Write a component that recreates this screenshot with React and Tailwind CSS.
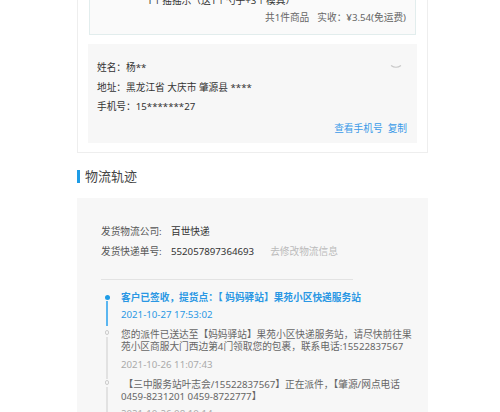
import React from "react";

const font = { fontFamily: '"Noto Sans", "Noto Sans CJK SC", sans-serif' };

function Chevron() {
  return (
    <svg width="12" height="6" viewBox="0 0 12 6" className="absolute right-[15px] top-[20px]">
      <path d="M1 1.5 Q6 5 11 1.5" fill="none" stroke="#c8c8c8" strokeWidth="1.2" />
    </svg>
  );
}

export default function App() {
  return (
    <div className="w-[500px] h-[412px] overflow-hidden bg-white text-[9.7px] text-[#333]" style={font}>
      {/* order card */}
      <div className="ml-[77px] w-[351px] -mt-[25px] border-x border-b border-[#eeeeee] px-[10px] pb-[9px]">
        <div className="mx-px border border-[#e2eded] bg-[#fafafa] pt-[17px] pb-[8px]">
          <div className="pl-[57px] leading-[16px] text-[#333]">1个摇摇乐（送1个勺子+3个模具）</div>
          <div className="mt-px pr-[9px] leading-[16px] text-right text-[#666]">
            <span>共1件商品</span>
            <span className="ml-[8px]">实收：¥3.54(免运费)</span>
          </div>
        </div>
        <div className="relative mt-[9px] bg-[#f7f7f7] pl-[9px] pr-[10px] pt-[14px] pb-[5px] leading-[19.5px] text-[#333]">
          <Chevron />
          <div>姓名：杨**</div>
          <div>地址：黑龙江省 大庆市 肇源县 ****</div>
          <div>手机号：15*******27</div>
          <div className="mt-[2px] text-right text-[#3a9ae8]">
            <span>查看手机号</span>
            <span className="ml-[5px]">复制</span>
          </div>
        </div>
      </div>

      {/* title */}
      <div className="ml-[77px] mt-[15px] flex items-center">
        <div className="w-[3px] h-[13px] bg-[#1e9ce6]" />
        <div className="ml-[5px] text-[13px] leading-[16px] text-[#444]">物流轨迹</div>
      </div>

      {/* logistics box */}
      <div className="ml-[77px] mt-[14px] w-[351px] h-[300px] bg-[#f7f7f7] pl-[24px] pr-[12px] pt-[24px]">
        <div className="leading-[20px] text-[#555]">
          <div className="flex">
            <span className="w-[70px]">发货物流公司:</span>
            <span className="text-[#333]">百世快递</span>
          </div>
          <div className="flex">
            <span className="w-[70px]">发货快递单号:</span>
            <span className="text-[#333]">552057897364693</span>
            <span className="ml-[16px] text-[#bbbbbb]">去修改物流信息</span>
          </div>
        </div>
        <div className="mt-[17px] w-[252px] h-px bg-[#e3e3e3]" />

        <div className="mt-[11px]">
          {/* item 1 */}
          <div className="flex">
            <div className="w-[20px] flex flex-col items-center pr-[9px] pl-[1px]">
              <div className="mt-[4px] w-[5px] h-[5px] rounded-full bg-[#1e9ce6]" />
              <div className="mt-[1px] w-[2px] flex-1 bg-[#5bb6f0] mb-[3px]" />
            </div>
            <div className="pb-[7px]">
              <div className="leading-[14px] font-bold text-[#2a97e4]">客户已签收，提货点：【 妈妈驿站】果苑小区快递服务站</div>
              <div className="mt-[3px] leading-[14px] text-[#2a97e4]">2021-10-27 17:53:02</div>
            </div>
          </div>
          {/* item 2 */}
          <div className="flex">
            <div className="w-[20px] flex flex-col items-center pr-[9px] pl-[1px]">
              <div className="mt-[1px] w-[4px] h-[5px] rounded-full border border-[#cccccc]" />
              <div className="mt-[2px] w-[2px] flex-1 bg-[#e2e2e2]" />
            </div>
            <div className="pb-[7px]">
              <div className="leading-[12px] text-[#666]">
                您的派件已送达至【妈妈驿站】果苑小区快递服务站，请尽快前往果<br />
                苑小区商服大门西边第4门领取您的包裹，联系电话:15522837567
              </div>
              <div className="mt-[5px] leading-[14px] text-[#aaaaaa]">2021-10-26 11:07:43</div>
            </div>
          </div>
          {/* item 3 */}
          <div className="flex">
            <div className="w-[20px] flex flex-col items-center pr-[9px] pl-[1px]">
              <div className="mt-[1px] w-[4px] h-[5px] rounded-full border border-[#cccccc]" />
              <div className="mt-[2px] w-[2px] flex-1 bg-[#e2e2e2]" />
            </div>
            <div className="pb-[7px]">
              <div className="leading-[11.5px] text-[#666]">
                &nbsp;【三中服务站叶志会/15522837567】正在派件，【肇源/网点电话<br />
                0459-8231201 0459-8722777】
              </div>
              <div className="mt-[5px] leading-[14px] text-[#aaaaaa]">2021-10-26 08:10:14</div>
            </div>
          </div>
        </div>
      </div>
    </div>
  );
}
